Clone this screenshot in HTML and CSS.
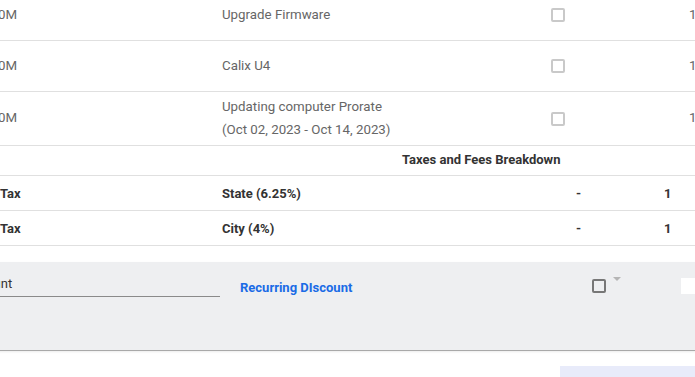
FILE: index.html
```html
<!DOCTYPE html>
<html lang="en">
<head>
    <meta charset="UTF-8">
    <meta name="viewport" content="width=device-width, initial-scale=1.0">
    <title>Order Items</title>
    <link rel="stylesheet" href="styles.css">
</head>
<body>
    <div class="page">
        <div class="items">
            <div class="row item">
                <div class="c-plan">100M</div>
                <div class="c-desc">Upgrade Firmware</div>
                <div class="c-check"><span class="box"></span></div>
                <div class="c-qty">1</div>
            </div>
            <div class="row item">
                <div class="c-plan">100M</div>
                <div class="c-desc">Calix U4</div>
                <div class="c-check"><span class="box"></span></div>
                <div class="c-qty">1</div>
            </div>
            <div class="row item tall">
                <div class="c-plan">100M</div>
                <div class="c-desc two-line">Updating computer Prorate<br>(Oct 02, 2023 - Oct 14, 2023)</div>
                <div class="c-check"><span class="box"></span></div>
                <div class="c-qty">1</div>
            </div>
        </div>

        <div class="taxes">
            <div class="row tax-head">
                <div></div>
                <div class="head-title">Taxes and Fees Breakdown</div>
            </div>
            <div class="row tax">
                <div class="c-name">Tax</div>
                <div class="c-desc">State (6.25%)</div>
                <div class="c-dash">-</div>
                <div class="c-amt">1</div>
            </div>
            <div class="row tax">
                <div class="c-name">Tax</div>
                <div class="c-desc">City (4%)</div>
                <div class="c-dash">-</div>
                <div class="c-amt">1</div>
            </div>
        </div>

        <div class="discount-panel">
            <div class="field">Discount</div>
            <div class="discount-label">Recurring DIscount</div>
            <span class="box dark"></span>
            <span class="caret"></span>
            <div class="amount-input"></div>
        </div>

        <div class="summary"></div>
    </div>
</body>
</html>
```

FILE: styles.css
```css
html, body {
    margin: 0;
    padding: 0;
    overflow: hidden;
    background: #fff;
}
body {
    font-family: Roboto, "Liberation Sans", Arial, sans-serif;
    color: #333;
}
.page {
    width: 1000px;
    margin-left: -60px;
    margin-top: -10px;
}
.row {
    display: grid;
    align-items: center;
    box-sizing: border-box;
    border-bottom: 1px solid #e0e0e0;
}
.item {
    grid-template-columns: 282px 318px 35px auto;
    height: 51px;
    padding-bottom: 2px;
    font-size: 13.3px;
    color: #666;
}
.item.tall {
    height: 54px;
}
.item .c-check {
    margin-top: 2px;
}
.item .c-plan {
    padding-left: 43px;
}
.two-line {
    line-height: 23px;
}
.c-check {
    display: flex;
    justify-content: center;
}
.box {
    display: inline-block;
    box-sizing: border-box;
    width: 14px;
    height: 14px;
    border: 2px solid #c9c9c9;
    border-radius: 2px;
}
.c-qty {
    padding-left: 114px;
}
.tax-head {
    grid-template-columns: 282px auto;
    height: 30px;
    padding-bottom: 2px;
    font-size: 13px;
    font-weight: 700;
}
.head-title {
    padding-left: 180px;
}
.tax {
    grid-template-columns: 282px 354px 88px auto;
    height: 35px;
    font-size: 13px;
    font-weight: 700;
    color: #333;
}
.tax .c-name {
    padding-left: 60px;
}
.discount-panel {
    display: flex;
    align-items: flex-start;
    height: 88px;
    margin-top: 16px;
    background: #eeeff1;
    border-bottom: 1px solid #a9a9a9;
    box-shadow: 0 1px 2px rgba(0,0,0,0.08);
}
.field {
    box-sizing: border-box;
    width: 259px;
    height: 26px;
    margin: 9px 0 0 21px;
    font-size: 13px;
    line-height: 25px;
    color: #333;
    border-bottom: 1px solid #8a8a8a;
}
.discount-label {
    width: 352px;
    margin: 18px 0 0 20px;
    font-size: 13px;
    line-height: 16px;
    font-weight: 700;
    color: #1a6be6;
}
.box.dark {
    margin-top: 17px;
    border-color: #777;
}
.caret {
    margin: 15px 0 0 7px;
    width: 0;
    height: 0;
    border-left: 4px solid transparent;
    border-right: 4px solid transparent;
    border-top: 4px solid #b5b5b5;
}
.amount-input {
    width: 100px;
    height: 16px;
    margin: 16px 0 0 60px;
    background: #fff;
}
.summary {
    width: 200px;
    height: 30px;
    margin: 15px 0 0 620px;
    background: #e8ebfa;
}
```
